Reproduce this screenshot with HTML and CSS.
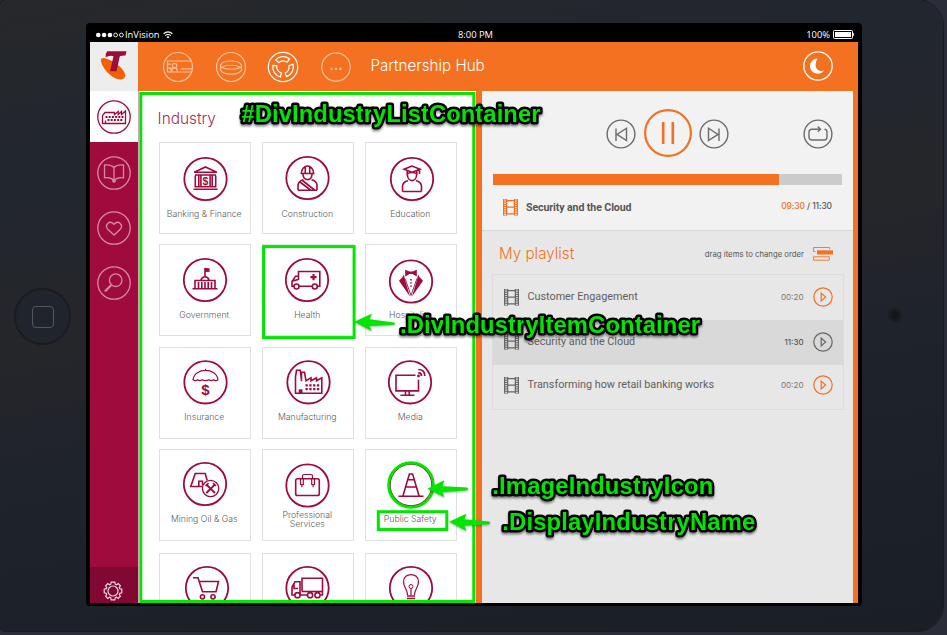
FILE: index.html
```html
<!DOCTYPE html>
<html lang="en">
<head>
<meta charset="utf-8">
<title>Partnership Hub</title>
<link rel="stylesheet" href="styles.css">
</head>
<body>
<svg class="defs" width="0" height="0">
  <defs>
    <g id="film"><path d="M.6 0V16.5M14.4 0V16.5M3.6 0V16.5M11.4 0V16.5M3.6 1.7H11.4M3.6 8.2H11.4M3.6 14.8H11.4" fill="none" stroke="currentColor" stroke-width="1.3"/><path d="M2.1 .5V16.5M12.9 .5V16.5" fill="none" stroke="currentColor" stroke-width="2.6" stroke-dasharray="1 1.2"/></g>
    <g id="play"><circle cx="10" cy="10" r="9.2"/><path d="M8.2 6V14L12.6 10Z"/></g>
    <g id="ring"><circle r="21.2" stroke-width="1.8"/></g>
  </defs>
</svg>
<div class="tablet">
  <div class="home"><i></i></div>
  <div class="bezel">
    <div class="status">
      <div class="carrier">
        <svg width="29" height="8" viewBox="0 0 29 8"><g fill="#fff"><circle cx="2.3" cy="4" r="2.3"/><circle cx="8.1" cy="4" r="2.3"/><circle cx="13.9" cy="4" r="2.3"/></g><g fill="none" stroke="#fff" stroke-width=".9"><circle cx="19.6" cy="4" r="1.9"/><circle cx="25.4" cy="4" r="1.9"/></g></svg>
        <span>InVision</span>
        <svg class="wifi" width="10" height="8" viewBox="0 0 10 8"><path d="M.6 2.7Q5-.9 9.4 2.7M2.2 4.6Q5 2.4 7.8 4.6" fill="none" stroke="#fff" stroke-width="1.2"/><path d="M3.4 5.9Q5 4.7 6.6 5.9L5 7.6Z" fill="#fff"/></svg>
      </div>
      <div class="clock">8:00 PM</div>
      <div class="battery"><span>100%</span>
        <svg width="22" height="9" viewBox="0 0 22 9"><rect x=".5" y=".5" width="19" height="8" rx="1" fill="none" stroke="#fff"/><rect x="2" y="2" width="16" height="5" fill="#fff"/><path d="M20 2.5Q22 4.5 20 6.5Z" fill="#fff"/></svg>
      </div>
    </div>
    <div class="screen">
      <header class="top">
        <div class="logo">
          <svg width="48" height="49" viewBox="90 42 48 49"><path d="M101 61C100 57.5 104 57.3 107 59C114 61 125 69 125.3 75.5C124.5 81.5 117 80 111 75.5C106 72 102 66 101 61Z" fill="#f26000"/><path d="M107.2 51.2H126.5L125.5 55.5Q122.5 55.2 119.8 56.2L116.5 71.2H110L113.5 56.2Q109.5 55 105.6 57.3Q105.5 53 107.2 51.2Z" fill="#9d0b3d"/></svg>
        </div>
        <nav class="apps">
          <svg class="dim" width="32" height="32" viewBox="-16 -16 32 32"><circle r="14.5"/><path d="M-10.5 5V-6H13M-10.5 5H13M3 1.8H14M-10.3 -2.8H-7.2M-7 4.8V1.2H-10M-.8 4.8V3Q-.8 1-3.5 1Q-6 1-6 3V4.8"/><circle cx="-3.4" cy="-1.4" r="2.3"/></svg>
          <svg class="dim" width="32" height="32" viewBox="-16 -16 32 32"><circle r="14.5"/><path d="M-10.5-1.5C-9-7.5 9-7.5 10.5-1.5V3C8 8.5-8 8.5-10.5 3ZM-10.5 0C-5 3 5 3 10.5 0M-10 .5C-4-2.5 4-2.5 10 .5"/></svg>
          <svg class="lit" width="32" height="32" viewBox="-16 -16 32 32"><circle r="14.7"/><g id="arc"><path d="M-7.4-7.2A10.3 10.3 0 0 1 6.5-8L4.1-4.8A6.2 6.2 0 0 0-4.2-4.4Z"/></g><use href="#arc" transform="rotate(120)"/><use href="#arc" transform="rotate(240)"/></svg>
          <svg class="dim" width="32" height="32" viewBox="-16 -16 32 32"><circle r="14.2"/><path d="M-5.5 1.8H-3.3M-1.1 1.8H1.1M3.3 1.8H5.5" stroke-width="2.2"/></svg>
        </nav>
        <h1>Partnership Hub</h1>
        <svg class="moon" width="32" height="32" viewBox="-16 -16 32 32"><circle r="14.2" fill="none" stroke="#fff" stroke-width="1.3"/><path d="M-.2-7.6A7.7 7.7 0 1 0 6 4.5C-1.6 7.2-5-2-.2-7.6Z" fill="#fff"/></svg>
      </header>
      <div class="body">
        <aside class="rail">
          <div class="tab active"><svg width="36" height="36" viewBox="-18 -18 36 36"><circle r="16.2"/><path d="M-11.5 6.5V-1.5L-9-4.5H.5V-2.3L4.2-5.5V-2.5L7.5-5.5V-2.5L11.5-6V6.5Z"/><path d="M-8.5 0H9.5M-6.5 3H9.5" stroke-dasharray="2 1.2" stroke-width="1.8"/><path d="M-8.5 6V3.5"/></svg></div>
          <div class="tab"><svg width="36" height="36" viewBox="-18 -18 36 36"><circle r="16.2"/><path d="M0-5.5Q-3-8.5-9.5-8V4.8Q-3 4 0 7.5Q3 4 9.5 4.8V-8Q3-8.5 0-5.5V10M-2 8H2"/></svg></div>
          <div class="tab"><svg width="36" height="36" viewBox="-18 -18 36 36"><circle r="16.2"/><path d="M0 7L-6 1.5C-10-3-4.5-8.5 0-3.7C4.5-8.5 10-3 6 1.5Z"/></svg></div>
          <div class="tab"><svg width="36" height="36" viewBox="-18 -18 36 36"><circle r="16.2"/><circle cx="1.7" cy="-2.8" r="6.3"/><path d="M-3 1.7L-9.5 8.2M-2.5 2.3L-8.5 8.5"/></svg></div>
          <div class="settings"><svg width="22" height="22" viewBox="-11 -11 22 22"><circle r="5"/><path d="M-1.8-8.8H1.8L2.3-6.8L3.5-6.3L5.2-7.4L7.4-5.2L6.3-3.5L6.8-2.3L8.8-1.8V1.8L6.8 2.3L6.3 3.5L7.4 5.2L5.2 7.4L3.5 6.3L2.3 6.8L1.8 8.8H-1.8L-2.3 6.8L-3.5 6.3L-5.2 7.4L-7.4 5.2L-6.3 3.5L-6.8 2.3L-8.8 1.8V-1.8L-6.8-2.3L-6.3-3.5L-7.4-5.2L-5.2-7.4L-3.5-6.3L-2.3-6.8Z"/></svg></div>
        </aside>
        <main class="industries">
          <h2>Industry</h2>
          <div class="grid">
            <div class="card"><svg viewBox="1 1 90 65"><g transform="translate(46.5 37)"><use href="#ring"/><path d="M-11.3-6.8L0-12L11.3-6.8ZM-12 10.2H12M-10.5-4H10.5M-10.2-3.5V7.8H10.2V-3.5M-6.7-3.5V7.8M6.7-3.5V7.8M-4.6-3.5V7.8M4.6-3.5V7.8"/><text y="5.6" class="dollar">$</text></g></svg><span>Banking &amp; Finance</span></div>
            <div class="card"><svg viewBox="1 1 90 65"><g transform="translate(45.5 36)"><use href="#ring"/><path d="M-7-4.5H7M-6-5C-6-9-3-12-0-12C3-12 6-9 6-5M-2.2-11V-5M2.2-11V-5M-4.6-4C-4 3.5 4 3.5 4.6-4M-9.5 12.3V7Q-9 3-4 1.8M9.5 12.3V7Q9 3 4 1.8M-9.5 12.3H9.5M-7.5 4L3 12M-5 2.5L7 12"/></g></svg><span>Construction</span></div>
            <div class="card"><svg viewBox="1 1 90 65"><g transform="translate(47 37)"><use href="#ring"/><path d="M0-13L-8-9.8L0-6.8L8-9.8ZM-4.8-8V-5.2Q0-8 4.8-5.2V-8M7.5-9.5V-5M-4.6-4.5C-4.5 3.6 4.5 3.6 4.6-4.5M-9.5 12.5V7Q-9 3-4 1.5M9.5 12.5V7Q9 3 4 1.5M-9.5 12.5H9.5"/></g></svg><span>Education</span></div>

            <div class="card r2"><svg viewBox="1 1 90 65"><g transform="translate(46 36)"><use href="#ring"/><path d="M-12.5 8.8H12.5M-10 8V.5H10V8M-6.5 2V8M-3.2 2V8M0 2V8M3.2 2V8M6.5 2V8M-4 0Q-3-3.2 0-3.2Q3-3.2 4 0M0-3V-12"/><path class="fill" d="M0-12.3L5-11.5L4.2-10L5-8.3L0-8Z"/></g></svg><span>Government</span></div>
            <div class="card r2"><svg viewBox="1 1 90 65"><g transform="translate(45 36)"><use href="#ring"/><path d="M-13 6.2H-15V1.2L-8.5-.5V-8.5H12.8V6.2H10.5M-8 6.2H5M-14.5 1L-11.5-3.8H-8.5"/><circle cx="-10.5" cy="6.5" r="2.5"/><circle cx="7.8" cy="6.5" r="2.5"/><path d="M6.5-6V.2M3.4-2.9H9.6" stroke-width="2.1"/></g></svg><span>Health</span></div>
            <div class="card r2"><svg viewBox="1 1 90 65"><g transform="translate(46 37.5)"><use href="#ring"/><path class="fill" d="M-5.8-11.8L-1.5-10H1.5L5.8-11.8V-5L1.5-7.5H-1.5L-5.8-5ZM-7-7L-6-1.5L-1 15L-12-.8L-8.5-4.5ZM7-7L6-1.5L1 15L12-.8L8.5-4.5Z"/><path d="M-6-3L0 14L6-3" stroke-width=".9"/><path d="M0-2.5V7" stroke-dasharray="1.4 1.8"/></g></svg><span>Hospitality</span></div>

            <div class="card r3"><svg viewBox="1 1 90 65"><g transform="translate(46.5 35.3)"><use href="#ring"/><path d="M-12.5-2.5C-11-15 11-15 12.5-2.5Q10-.8 8-2.5Q5.5-.8 3.5-2.5Q0-.8-3.5-2.5Q-5.5-.8-8-2.5Q-10-.8-12.5-2.5ZM0-13.5V-11.5" stroke-width="1.2"/><text y="12.6" class="dollar big">$</text></g></svg><span>Insurance</span></div>
            <div class="card r3"><svg viewBox="1 1 90 65"><g transform="translate(46.5 35.3)"><use href="#ring"/><path d="M-13 11V-5.5L-12-12H-8.2L-7-2.5V-10H-4L-2.5-1.5L2.5-4.5V-1.5L8-4.5V-1.5L13.3-4.5V11ZM-7-3V-1"/><path d="M-3 3H11.5M-3 6.8H11.5" stroke-width="2.2" stroke-dasharray="2.3 1.5"/><path class="fill" d="M-9.8 7H-6V11H-9.8Z"/></g></svg><span>Manufacturing</span></div>
            <div class="card r3"><svg viewBox="1 1 90 65"><g transform="translate(45 35.3)"><use href="#ring"/><path d="M5.5-7H-14V8.6H8.5V-2.5M-4.5 9V12.5M-.8 9V12.5M-9.5 13H4.5"/><path d="M8.3-12.8Q14.8-12.8 14.8-6.3M8.3-9.4Q11.5-9.4 11.5-6.2" stroke-width="1.7"/><circle class="fill" cx="8.5" cy="-6.3" r="1.4"/></g></svg><span>Media</span></div>

            <div class="card r3"><svg viewBox="1 1 90 65"><g transform="translate(46 35)"><use href="#ring"/><path d="M-2.5 2.5H-14.2L-9.8-10.5H.2L2.2-3.5M-6.2 2.5V-2.8H-2.5V1"/><circle cx="5.6" cy="4.5" r="8.2" stroke-width="1.3"/><path d="M1.3 9L10 .5M1.3 .5L10 9" stroke-width="1.8"/><path d="M.5 2L3.5-.8M8-.8L11 2"/></g></svg><span>Mining Oil &amp; Gas</span></div>
            <div class="card prof"><svg viewBox="1 1 90 65"><g transform="translate(45.5 36.5)"><use href="#ring"/><rect x="-11.8" y="-6.8" width="23.6" height="16.8" rx="1.8"/><path d="M-5-7V-9.5Q-5-11-3.5-11H3.5Q5-11 5-9.5V-7M-7-6.5V-1H-4.2V-6.5M4.2-6.5V-1H7V-6.5M-5.6-1V1.8M5.6-1V1.8" stroke-width="1.2"/></g></svg><span>Professional<br>Services</span></div>
            <div class="card r3"><svg viewBox="1 1 90 65"><g transform="translate(46 36)"><use href="#ring"/><path d="M-12.5 11.2H12.5M-8 10.8L-1.6-11H1.6L8 10.8M-3.5-5.3H3.5M-5.3 2H5.3"/></g></svg><span>Public Safety</span></div>

            <div class="card"><svg viewBox="1 1 90 65"><g transform="translate(48 35)"><use href="#ring"/><path d="M-14-10.3H-9L-4.5 3.8H9L11.5-6.5H-8"/><circle cx="-4.5" cy="8.8" r="2.1"/><circle cx="6" cy="8.8" r="2.1"/></g></svg></div>
            <div class="card"><svg viewBox="1 1 90 65"><g transform="translate(45.5 35)"><use href="#ring"/><path d="M-12.5 7H-15.5V-1L-12.5-6.2H-7.5V7M-5.5 3.5V-9.8H15V7H13M-7.8 7H0M-13.5-4V.5H-9.5"/><path d="M-5.5 3.5H15"/><circle cx="-10" cy="7.2" r="2.6"/><circle cx="2.6" cy="7.2" r="2.6"/><circle cx="10" cy="7.2" r="2.6"/></g></svg></div>
            <div class="card"><svg viewBox="1 1 90 65"><g transform="translate(46 35)"><use href="#ring"/><path d="M-3.5 7C-3.5 1.5-7.5-.5-7.5-6.5C-7.5-15.8 7.5-15.8 7.5-6.5C7.5-.5 3.5 1.5 3.5 7M0 7V.5" stroke-width="1.2"/><circle cy="-1.5" r="2" stroke-width="1"/><path d="M-4 8H4M-4 10.5H4M-3 13H3" stroke-width="1.5"/></g></svg></div>
          </div>
        </main>
        <section class="side">
          <div class="player">
            <div class="controls">
              <svg class="gray" width="30" height="30" viewBox="-15 -15 30 30"><circle r="13.9"/><path d="M-5-5.5V7M5.5-5.8V6.5L-4 .4Z"/></svg>
              <svg class="pause" width="50" height="50" viewBox="-25 -25 50 50"><circle r="22.9"/><path d="M-4.8-11V11M4.8-11V11" stroke-width="2.6"/></svg>
              <svg class="gray" width="30" height="30" viewBox="-15 -15 30 30"><circle r="13.9"/><path d="M5-5.5V7M-5.5-5.8V6.5L4 .4Z"/></svg>
              <svg class="gray repeat" width="30" height="30" viewBox="-15 -15 30 30"><circle r="13.9"/><path d="M-3.5-4.8H-6Q-9-4.8-9-2V3Q-9 6 -6 6H6Q9 6 9 3V-2Q9-4.8 6.5-4.8M-3.5-4.8H1.8M-.3-7.5L2.5-4.8L-.3-2.2"/></svg>
            </div>
            <div class="progress"><div></div></div>
            <div class="now"><svg width="15" height="17"><use href="#film"/></svg><b>Security and the Cloud</b><span><em>09:30</em> / 11:30</span></div>
          </div>
          <div class="listhead"><h2>My playlist</h2><span>drag items to change order</span>
            <svg width="20" height="14" viewBox="0 0 20 14"><path d="M2.5 4.5H.5V.5H16.5V2M.5 9.8H16.3V13.2H.5Z" fill="none" stroke="#f47121" stroke-width=".9"/><path d="M4 3.3H20V7.5H4Z" fill="#f47121"/></svg></div>
          <ul class="list">
            <li><svg class="film" width="15" height="17"><use href="#film"/></svg><span class="name">Customer Engagement</span><span class="time">00:20</span><svg class="play" width="20" height="20"><use href="#play"/></svg></li>
            <li class="current"><svg class="film" width="15" height="17"><use href="#film"/></svg><span class="name">Security and the Cloud</span><span class="time">11:30</span><svg class="play" width="20" height="20"><use href="#play"/></svg></li>
            <li class="last"><svg class="film" width="15" height="17"><use href="#film"/></svg><span class="name">Transforming how retail banking works</span><span class="time">00:20</span><svg class="play" width="20" height="20"><use href="#play"/></svg></li>
          </ul>
        </section>
      </div>
    </div>
  </div>
  <div class="camera"></div>
</div>
<svg class="notes" width="947" height="635" viewBox="0 0 947 635">
  <g fill="none" stroke="#00e600" stroke-width="3">
    <rect x="140.8" y="93.5" width="333" height="508"/>
    <rect x="263.6" y="246.6" width="90.5" height="91"/>
    <circle cx="411" cy="485" r="22.3"/>
    <rect x="378.3" y="511.7" width="68.5" height="17.8"/>
  </g>
  <g class="arrows">
    <path d="M354.3 321.7L371.8 313.7L369.5 319.2L394 322.4Q396 323.6 394 324.8L369.5 326L371.8 330.9Z"/>
    <path d="M427.5 488.7L444.2 480.3L442.5 486.2L467 487.6Q469 489 467 490.2L442.5 492.2L444.3 497.3Z"/>
    <path d="M449.2 521.7L466.4 513.7L464.5 519.3L489 521.4Q491 522.8 489 524.2L464.5 525.8L466.4 530.9Z"/>
  </g>
  <g class="captions">
    <text x="241.5" y="122" textLength="299">#DivIndustryListContainer</text>
    <text x="400" y="332.7" textLength="300">.DivIndustryItemContainer</text>
    <text x="492.3" y="494" textLength="221">.ImageIndustryIcon</text>
    <text x="502.3" y="530" textLength="253">.DisplayIndustryName</text>
  </g>
</svg>
</body>
</html>
```
FILE: styles.css
```css
* { box-sizing: border-box; }
body { margin: 0; width: 947px; height: 635px; overflow: hidden; background: #2b2e38; font-family: Inter, "Liberation Sans", sans-serif; }
svg { display: block; flex: none; }
.defs { position: absolute; }
h1, h2 { margin: 0; font-weight: 300; white-space: nowrap; }

.tablet { display: flex; width: 943px; height: 631px; border-radius: 6px 26px 26px 6px; background: linear-gradient(170deg, #26282b 0%, #22262e 22%, #25262a 45%, #1f232b 60%, #1a1e25 100%); box-shadow: 0 0 0 1px #191b20; }
.home { flex: none; width: 57px; height: 57px; margin: 288px 15px 0 14px; border: 2px solid #1a1c21; border-radius: 50%; background: #20242c; display: flex; align-items: center; justify-content: center; }
.home i { width: 22px; height: 22px; border: 1.5px solid #54565a; border-radius: 4px; }
.camera { flex: none; width: 14px; height: 14px; margin: 308px 0 0 26px; border-radius: 50%; background: #15171b; border: 3px solid #1b1d22; }

.bezel { flex: none; width: 776px; height: 583px; margin-top: 23px; padding: 1px 4px 3px; background: #000; border-radius: 4px; }
.status { height: 18px; display: grid; grid-template-columns: 1fr auto 1fr; align-items: center; color: #fff; font: 9.4px/13px "Open Sans", sans-serif; padding: 3px 3px 0 6px; }
.carrier, .battery { display: flex; align-items: center; }
.wifi { margin-left: 3px; }
.battery { justify-content: flex-end; gap: 3px; }
.screen { height: 561px; display: flex; flex-direction: column; overflow: hidden; background: #f47121; }

.top { flex: none; height: 49px; display: flex; align-items: center; }
.logo { width: 48px; background: #ededed; }
.apps { display: flex; gap: 20.6px; margin-left: 24px; }
.apps svg { fill: none; stroke-width: 1.2; }
.dim { stroke: #fac09a; }
.lit { stroke: #fff; stroke-width: 1.4; }
h1 { margin: -1px 0 0 18.6px; font-size: 15.2px; line-height: 20px; color: #fff; }
.moon { margin: -1px 24px 0 auto; }

.body { flex: 1; min-height: 0; display: flex; }
.rail { width: 49px; background: #9f0b3d; border-right: 1px solid #d9a3b6; display: flex; flex-direction: column; }
.tab { height: 55px; display: flex; justify-content: center; }
.tab svg { fill: none; stroke: #d48aa6; stroke-width: 1.3; }
.tab.active { height: 51px; padding-top: 8px; margin-bottom: 13.4px; background: #fff; }
.tab.active svg { stroke: #9f0b3d; }
.settings { margin-top: auto; height: 36px; padding: 13px 0 0 0; background: #810832; display: flex; justify-content: center; }
.settings svg { fill: none; stroke: #f0d5de; stroke-width: 1.2; margin-right: 2px; }

.industries { width: 337px; padding: 18px 0 0 20px; background: #fff; overflow: hidden; }
.industries h2 { font-size: 15.4px; line-height: 20px; color: #a82a55; margin: 0 0 13px -1.4px; }
.grid { display: grid; grid-template-columns: repeat(3, 92px); column-gap: 11px; grid-template-rows: 102px 103px 102px 104px 92px; align-items: start; }
.card { height: 92px; border: 1px solid #e0e0e0; display: flex; flex-direction: column; align-items: center; font-size: 8.7px; line-height: 10px; font-weight: 300; color: #5c5c5c; text-align: center; white-space: nowrap; }
.card span { margin: .6px 1.5px 0 0; }
.card svg { width: 90px; height: 65px; fill: none; stroke: #9f0b3d; stroke-width: 1.6; }
.card .fill { fill: #9f0b3d; stroke: none; }
.dollar { font: bold 10.5px "Liberation Sans", sans-serif; fill: #9f0b3d; stroke: none; text-anchor: middle; }
.dollar.big { font-size: 15px; }
.card.r2 span { margin-top: 0; }
.card.r3 span { margin-top: -1.5px; }
.card.prof { line-height: 9px; }
.card.prof span { margin-top: -4px; }

.side { width: 371px; margin-left: 6px; background: #e7e7e7; color: #555; }
.player { height: 139.5px; background: #f2f2f2; border-bottom: 1px solid #d8d8d8; padding: 0 11px; }
.controls { display: flex; align-items: center; padding: 17px 9px 0 113px; height: 67px; gap: 6.5px; }
.gray { fill: none; stroke: #6b6b6b; stroke-width: 1.4; margin-top: 2px; }
.pause { fill: none; stroke: #f47121; stroke-width: 2.2; }
.repeat { margin-left: auto; }
.progress { height: 11px; margin-top: 16px; background: #cbcbcb; }
.progress div { width: 286px; height: 11px; background: #f47121; }
.now { display: flex; align-items: center; height: 44px; padding: 0 10px; }
.now svg { color: #f47121; }
.now b { margin: 1px 0 0 8px; font: 700 10.6px/14px Roboto, sans-serif; letter-spacing: -.1px; }
.now span { margin: -3px 0 0 auto; font: 500 8.5px/12px Inter, sans-serif; letter-spacing: -.12px; }
.now em { font-style: normal; color: #f47121; }
.listhead { height: 43.5px; padding: 3px 20px 0 17px; display: flex; align-items: center; }
.listhead h2 { color: #f47121; font-size: 15.2px; line-height: 20px; margin-top: 1px; }
.listhead span { margin: 1px 0 0 auto; font-size: 7.75px; line-height: 12px; }
.listhead svg { margin-left: 9px; }
.list { list-style: none; margin: 0 9px 0 10px; padding: 0; border: 1px solid #dcdcdc; }
.list li { height: 45px; display: flex; align-items: center; padding: 0 10.5px 1px 11px; }
.list .current { background: #d9d9d9; padding-bottom: 2px; }
.list .last { height: 44px; padding-bottom: 4px; }
.film { color: #666; }
.name { margin-left: 8.5px; font: 400 10.8px/14px Roboto, sans-serif; color: #606060; white-space: nowrap; }
.time { margin-left: auto; font-size: 8.1px; line-height: 12px; color: #777; }
.current .time { color: #444; }
.play { margin-left: 9px; fill: none; stroke: #f47121; stroke-width: 1.2; }
.current .play { stroke: #666; }

.notes { position: absolute; left: 0; top: 0; }
.arrows { fill: #00e600; filter: drop-shadow(0 1px 1px rgba(0, 0, 0, .35)); }
.captions { font: bold 23.8px "Liberation Sans", sans-serif; fill: #00e600; stroke: #000; stroke-width: 5px; stroke-linejoin: round; paint-order: stroke; filter: drop-shadow(0 2px 1px rgba(0, 0, 0, .45)); }
```
